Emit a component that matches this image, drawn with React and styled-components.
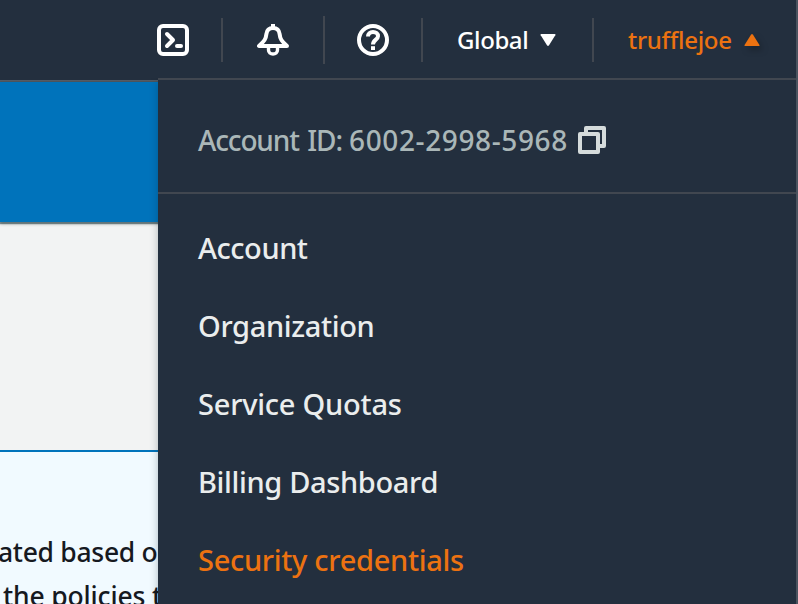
import React from "react";
import styled, { createGlobalStyle } from "styled-components";

const GlobalStyle = createGlobalStyle`
  *, *::before, *::after { box-sizing: border-box; }
  body {
    margin: 0;
    overflow: hidden;
    font-family: "Noto Sans", "Open Sans", sans-serif;
    -webkit-font-smoothing: antialiased;
  }
`;

const Page = styled.div`
  position: relative;
  display: flex;
  flex-direction: column;
  width: 798px;
  height: 604px;
  overflow: hidden;
  background: #f2f3f3;
`;

const Header = styled.header`
  display: flex;
  align-items: center;
  flex: none;
  height: 82px;
  padding: 0 0 0 157px;
  background: #232f3e;
  border-bottom: 2px solid #545b64;
`;

const IconButton = styled.button`
  display: flex;
  width: 32px;
  height: 32px;
  margin: 0 0 0 ${(p) => p.$gap || 0}px;
  padding: 0;
  border: 0;
  background: none;
  color: #fff;
`;

const Divider = styled.span`
  flex: none;
  width: 2px;
  height: ${(p) => (p.$tall ? 48 : 44)}px;
  margin-left: ${(p) => p.$gap}px;
  background: #414750;
`;

const NavButton = styled.button`
  display: flex;
  align-items: center;
  width: ${(p) => p.$width}px;
  margin: 0 0 0 34px;
  padding: 0;
  border: 0;
  background: none;
  font: 500 24px/32px "Noto Sans", sans-serif;
  letter-spacing: ${(p) => p.$track}px;
  white-space: nowrap;
  color: ${(p) => (p.$active ? "#ec7211" : "#fff")};
`;

const Caret = styled.svg`
  flex: none;
  width: 16px;
  height: 14px;
  margin-left: auto;
  fill: currentColor;
  filter: ${(p) => (p.$shadow ? "drop-shadow(3px 4px 3px rgba(0,0,0,.25))" : "none")};
`;

const Banner = styled.div`
  flex: none;
  height: 140px;
  background: #0073bb;
  box-shadow: 0 1px 1px 1px rgba(0, 28, 36, 0.45), 0 2px 3px rgba(0, 28, 36, 0.3);
`;

const Notice = styled.section`
  flex: 1;
  margin-top: 228px;
  padding-top: 78px;
  border-top: 2px solid #0073bb;
  background: #f1faff;
`;

const NoticeLine = styled.p`
  margin: 0 0 0 ${(p) => p.$shift}px;
  font-size: 26.5px;
  font-weight: 500;
  line-height: 44px;
  letter-spacing: ${(p) => p.$track}px;
  white-space: pre;
  color: #16191f;
`;

const Menu = styled.div`
  position: absolute;
  top: 78px;
  right: 0;
  bottom: 0;
  width: 640px;
  background: #232f3e;
  border-top: 2px solid #414750;
  box-shadow: 0 4px 8px rgba(0, 28, 36, 0.28);
  clip-path: inset(0 0 0 -12px);
`;

const AccountRow = styled.div`
  display: flex;
  align-items: center;
  height: 114px;
  padding: 0 0 0 40px;
  border-bottom: 2px solid #414750;
`;

const AccountId = styled.div`
  display: flex;
  width: 380px;
  padding-top: 7px;
  font-size: 28px;
  font-weight: 500;
  line-height: 38px;
  white-space: pre;
  color: #aab7b8;
`;

const AccountLabel = styled.span`
  width: 151px;
  letter-spacing: -1.15px;
  word-spacing: 2.5px;
`;

const AccountNumber = styled.span`
  letter-spacing: 0.62px;
`;

const CopyIcon = styled.svg`
  width: 28px;
  height: 28px;
  margin-top: 8px;
  fill: none;
  stroke: #d5dbdb;
  stroke-width: 4;
  stroke-linejoin: round;
`;

const MenuList = styled.ul`
  margin: 0;
  padding: 15px 0 0 40px;
  list-style: none;
`;

const MenuItem = styled.li`
  height: 78px;
  font-size: 29px;
  font-weight: 500;
  line-height: 78px;
  letter-spacing: ${(p) => p.$track}px;
  white-space: nowrap;
  color: ${(p) => (p.$active ? "#ec7211" : "#eaeded")};
`;

const WindowEdge = styled.div`
  position: absolute;
  top: 0;
  right: 0;
  bottom: 0;
  width: 2px;
  background: #4a535f;
`;

const Glyph = styled.svg`
  width: 32px;
  height: 32px;
  fill: none;
  stroke: currentColor;
  stroke-width: 4;
  stroke-linejoin: round;
`;

const items = [
  { label: "Account", track: -0.45 },
  { label: "Organization", track: -0.35 },
  { label: "Service Quotas", track: -0.23 },
  { label: "Billing Dashboard", track: -0.35 },
  { label: "Security credentials", track: -0.3, active: true },
];

export default function App() {
  return (
    <Page>
      <GlobalStyle />
      <Header>
        <IconButton aria-label="CloudShell">
          <Glyph viewBox="0 0 32 32">
            <rect x="2" y="2" width="28" height="28" rx="4" />
            <path d="M10 10L16 16L10 22" strokeLinecap="round" />
            <path d="M20 22H24" strokeLinecap="round" />
          </Glyph>
        </IconButton>
        <Divider $gap={32} />
        <IconButton $gap={34} aria-label="Notifications">
          <Glyph viewBox="0 0 32 32">
            <path d="M16 0V4" />
            <path d="M16 4C12 4 9.8 6.5 9.4 10C8.9 15 7.5 17 2 22H30C24.5 17 23.1 15 22.6 10C22.2 6.5 20 4 16 4Z" />
            <path d="M11.5 23V26C11.5 28.5 13.5 30 16 30S20.5 28.5 20.5 26V23" strokeWidth="3.4" />
          </Glyph>
        </IconButton>
        <Divider $gap={34} $tall />
        <IconButton $gap={32} aria-label="Help">
          <Glyph viewBox="0 0 32 32">
            <circle cx="16" cy="16" r="14" />
            <path d="M11 12.6C11 9.8 13 8 16 8S21 9.6 21 12.2C21 15.6 16 15.8 16 20.5" />
            <path d="M16 22.2V26" />
          </Glyph>
        </IconButton>
        <Divider $gap={32} />
        <NavButton $width={99} $track={-0.4}>
          Global
          <Caret viewBox="0 0 16 14">
            <path d="M1.3 1H14.7Q16 1 15.3 2.2L9 12.2Q8 13.6 7 12.2L.7 2.2Q0 1 1.3 1Z" />
          </Caret>
        </NavButton>
        <Divider $gap={36} />
        <NavButton $width={132} $track={-0.3} $active>
          trufflejoe
          <Caret viewBox="0 0 16 14" $shadow>
            <path d="M1.3 13H14.7Q16 13 15.3 11.8L9 1.8Q8 .4 7 1.8L.7 11.8Q0 13 1.3 13Z" />
          </Caret>
        </NavButton>
      </Header>
      <Banner />
      <Notice>
        <NoticeLine $shift={-2} $track={-0.3}>ated based on</NoticeLine>
        <NoticeLine $shift={3} $track={-0.15}>the policies that</NoticeLine>
      </Notice>
      <Menu>
        <AccountRow>
          <AccountId>
            <AccountLabel>Account ID: </AccountLabel>
            <AccountNumber>6002-2998-5968</AccountNumber>
          </AccountId>
          <CopyIcon viewBox="0 0 28 28">
            <path d="M8 6V2H26V20H22" />
            <rect x="2" y="8" width="18" height="18" />
          </CopyIcon>
        </AccountRow>
        <MenuList>
          {items.map((item) => (
            <MenuItem key={item.label} $track={item.track} $active={item.active}>
              {item.label}
            </MenuItem>
          ))}
        </MenuList>
      </Menu>
      <WindowEdge />
    </Page>
  );
}
